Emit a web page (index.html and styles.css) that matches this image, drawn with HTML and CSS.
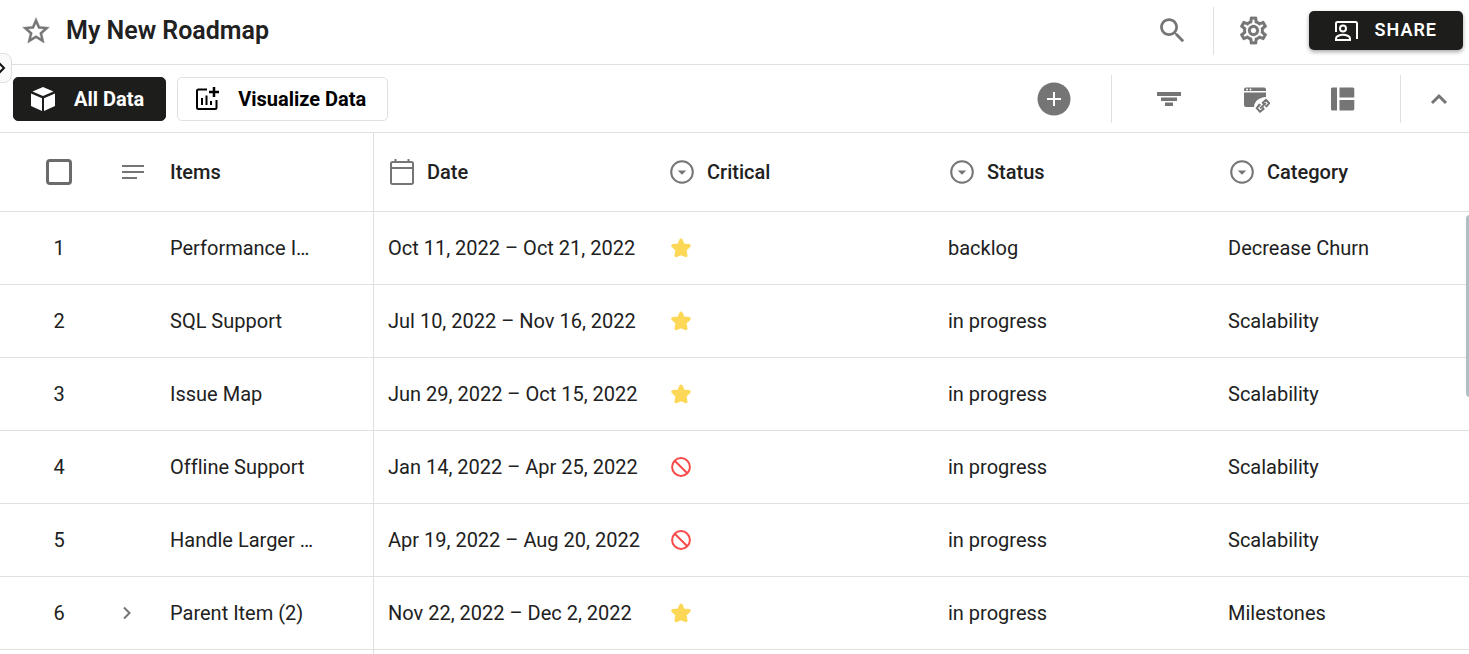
FILE: index.html
```
<!DOCTYPE html>
<html lang="en">
<head>
	<meta charset="UTF-8">
	<title>My New Roadmap</title>
	<link rel="stylesheet" href="styles.css">
</head>
<body>

<!-- shared icons -->
<svg class="sprite" aria-hidden="true">
	<symbol id="i-select" viewBox="0 0 24 24">
		<circle cx="12" cy="12" r="10.8" fill="none" stroke="currentColor" stroke-width="2"/>
		<path d="M7.8 10.4h8.4L12 14.8z" fill="currentColor"/>
	</symbol>
	<symbol id="i-star" viewBox="0 0 20 20">
		<path d="M10 2.300l2.200 4.800 5.800.700-4.100 4 .9 5.700L10 15.400l-4.800 2.100.9-5.700L2 7.800l5.800-.7z" fill="#fdd857" stroke="#fdd857" stroke-width="3.400" stroke-linejoin="round"/>
	</symbol>
	<symbol id="i-block" viewBox="0 0 20 20">
		<path d="M3.7 3.7l12.6 12.6M10 1.1a8.9 8.9 0 1 0 0 17.8a8.9 8.9 0 1 0 0-17.8z" fill="none" stroke="#fa4b4b" stroke-width="2"/>
	</symbol>
</svg>

<div class="app">
	<header class="header">
		<button class="iconBtn" aria-label="Favorite">
			<svg width="32" height="32" viewBox="0 0 24 24" fill="currentColor"><path stroke="currentColor" stroke-width=".3" d="M22 9.24l-7.19-.62L12 2 9.19 8.63 2 9.24l5.46 4.73L5.82 21 12 17.27 18.18 21l-1.63-7.03L22 9.24zM12 15.4l-3.76 2.27 1-4.28-3.32-2.88 4.38-.38L12 6.1l1.71 4.04 4.38.38-3.32 2.88 1 4.28L12 15.4z"/></svg>
		</button>
		<h1 class="title">My New Roadmap</h1>
		<button class="iconBtn" aria-label="Search">
			<svg width="33" height="33" viewBox="0 0 24 24" fill="currentColor"><path d="M15.5 14h-.79l-.28-.27C15.41 12.59 16 11.11 16 9.5 16 5.91 13.09 3 9.5 3S3 5.91 3 9.5 5.91 16 9.5 16c1.61 0 3.09-.59 4.23-1.57l.27.28v.79l5 4.99L20.49 19l-4.99-5zm-6 0C7.01 14 5 11.99 5 9.5S7.01 5 9.5 5 14 7.01 14 9.5 11.99 14 9.5 14z"/></svg>
		</button>
		<span class="divider dividerSmall"></span>
		<button class="iconBtn" aria-label="Settings">
			<svg width="33" height="33" viewBox="0 0 24 24" fill="currentColor"><path stroke="currentColor" stroke-width=".2" d="M19.43 12.98c.04-.32.07-.64.07-.98 0-.34-.03-.66-.07-.98l2.11-1.65c.19-.15.24-.42.12-.64l-2-3.46c-.09-.16-.26-.25-.44-.25-.06 0-.12.01-.17.03l-2.49 1c-.52-.4-1.08-.73-1.69-.98l-.38-2.65C14.46 2.18 14.25 2 14 2h-4c-.25 0-.46.18-.49.42l-.38 2.65c-.61.25-1.17.59-1.69.98l-2.49-1c-.06-.02-.12-.03-.18-.03-.17 0-.34.09-.43.25l-2 3.46c-.13.22-.07.49.12.64l2.11 1.65c-.04.32-.07.65-.07.98 0 .33.03.66.07.98l-2.11 1.65c-.19.15-.24.42-.12.64l2 3.46c.09.16.26.25.44.25.06 0 .12-.01.17-.03l2.49-1c.52.4 1.08.73 1.69.98l.38 2.65c.03.24.24.42.49.42h4c.25 0 .46-.18.49-.42l.38-2.65c.61-.25 1.17-.59 1.69-.98l2.49 1c.06.02.12.03.18.03.17 0 .34-.09.43-.25l2-3.46c.12-.22.07-.49-.12-.64l-2.11-1.65zm-1.98-1.71c.04.31.05.52.05.73 0 .21-.02.43-.05.73l-.14 1.13.89.7 1.08.84-.7 1.21-1.27-.51-1.04-.42-.9.68c-.43.32-.84.56-1.25.73l-1.06.43-.16 1.13-.2 1.35h-1.4l-.19-1.35-.16-1.13-1.06-.43c-.43-.18-.83-.41-1.23-.71l-.91-.7-1.06.43-1.27.51-.7-1.21 1.08-.84.89-.7-.14-1.13c-.03-.31-.05-.54-.05-.74s.02-.43.05-.73l.14-1.13-.89-.7-1.08-.84.7-1.21 1.27.51 1.04.42.9-.68c.43-.32.84-.56 1.25-.73l1.06-.43.16-1.13.2-1.35h1.39l.19 1.35.16 1.13 1.06.43c.43.18.83.41 1.23.71l.91.7 1.06-.43 1.27-.51.7 1.21-1.07.85-.89.7.14 1.13zM12 8c-2.21 0-4 1.79-4 4s1.79 4 4 4 4-1.79 4-4-1.79-4-4-4zm0 6c-1.1 0-2-.9-2-2s.9-2 2-2 2 .9 2 2-.9 2-2 2z"/></svg>
		</button>
		<button class="share">
			<svg width="24" height="22" viewBox="0 0 24 22" fill="none" stroke="currentColor" stroke-width="2">
				<path d="M2 12V3.500A1.500 1.500 0 0 1 3.500 2H21.500A1.500 1.500 0 0 1 23 3.500V19"/>
				<circle cx="9" cy="8.500" r="3"/>
				<path d="M2 20v-1.500C2 16 6 14.800 9 14.800S16 16 16 18.500V20z"/>
			</svg>
			<span class="shareText">SHARE</span>
		</button>
	</header>

	<nav class="toolbar">
		<button class="tab active">
			<svg width="26" height="26" viewBox="0 0 26 26" fill="currentColor">
				<path d="M13 1l10.500 4.500L13 10 2.500 5.500z"/>
				<path d="M1 7.500l11 4.800V25L1 20z"/>
				<path d="M25 7.500l-11 4.800V25l11-5z"/>
			</svg>
			All Data
		</button>
		<button class="tab">
			<svg width="26" height="26" viewBox="0 0 26 26" fill="none" stroke="currentColor" stroke-width="2">
				<path d="M13 3.500H4.500A1.500 1.500 0 0 0 3 5v16.500A1.500 1.500 0 0 0 4.500 23H21a1.500 1.500 0 0 0 1.500-1.500V14"/>
				<path d="M8 12v7M12.500 9.500V19M17 15v4"/>
				<path d="M20 1v10M15 6h10" stroke-width="2.500"/>
			</svg>
			Visualize Data
		</button>
		<span class="space"></span>
		<button class="iconBtn" aria-label="Add">
			<svg width="34" height="34" viewBox="0 0 34 34"><circle cx="17" cy="17" r="16.500" fill="currentColor"/><path d="M17 10v14M10 17h14" stroke="#fff" stroke-width="2"/></svg>
		</button>
		<span class="divider"></span>
		<div class="tools">
			<button class="iconBtn" aria-label="Filter">
				<svg width="24" height="16" viewBox="0 0 24 16" fill="currentColor"><path d="M0 1h24v4H0zM4 6.500h16v3.500H4zM8 11.500h8V15H8z"/></svg>
			</button>
			<button class="iconBtn" aria-label="Linked views">
				<svg width="28" height="28" viewBox="0 0 28 28" fill="currentColor">
					<path d="M2 4.500A2 2 0 0 1 4 2.500h18a2 2 0 0 1 2 2V6H2z"/>
					<path d="M2 7.500h22V12C17 12.500 12.500 16 12 22H4a2 2 0 0 1-2-2z"/>
					<circle cx="5" cy="4.400" r="1" fill="#fff"/><circle cx="8.500" cy="4.400" r="1" fill="#fff"/>
					<g fill="none" stroke="currentColor" stroke-width="2">
						<path d="M18.500 20.500L17.200 19.800 14.800 23.200 18 26.700 21.500 24 20.700 22.400"/>
						<path d="M21.500 18.800L20.800 17.600 24 14.800 27.200 18.200 24.500 21.300 23.300 20.600M18.200 23.400L23.800 18"/>
					</g>
				</svg>
			</button>
			<button class="iconBtn" aria-label="Layout">
				<svg width="24" height="24" viewBox="0 0 24 24" fill="currentColor"><path d="M0 1.500L1 .5h5v23H1l-1-1zM8.500.5H22l1.300 1v9H8.500zM8.500 13h14.800v9.500l-1.300 1H8.500z"/></svg>
			</button>
		</div>
		<span class="divider dividerLast"></span>
		<button class="iconBtn" aria-label="Collapse toolbar">
			<svg width="18" height="12" viewBox="0 0 18 12" fill="none" stroke="currentColor" stroke-width="3"><path d="M2 10l7-7 7 7"/></svg>
		</button>
	</nav>

	<!-- side panel handle -->
	<button class="handle" aria-label="Open side panel">
		<svg width="8" height="12" viewBox="0 0 8 12" fill="none" stroke="currentColor" stroke-width="2"><path d="M1 1l5 5-5 5"/></svg>
	</button>

	<main class="grid">
		<table class="table">
			<colgroup>
				<col class="cNum">
				<col class="cExpand">
				<col class="cItem">
				<col class="cField">
				<col class="cField">
				<col class="cField">
				<col>
			</colgroup>
			<thead>
				<tr>
					<th class="num"><input type="checkbox" class="check" aria-label="Select all"></th>
					<th class="expand">
						<svg width="23" height="16" viewBox="0 0 23 16" stroke="currentColor" stroke-width="2"><path d="M0 2h22M0 8h22M0 14h15"/></svg>
					</th>
					<th class="item">Items</th>
					<th><span class="field">
						<svg width="28" height="28" viewBox="0 0 28 28" fill="none" stroke="currentColor" stroke-width="2"><path d="M4.500 4h19a1.500 1.500 0 0 1 1.500 1.500v19a1.500 1.500 0 0 1-1.500 1.500h-19A1.500 1.500 0 0 1 3 24.500v-19A1.500 1.500 0 0 1 4.500 4zM3 10h22M7.500 1v3M20.500 1v3"/></svg>
						Date</span></th>
					<th><span class="field"><svg width="28" height="24"><use href="#i-select"/></svg>Critical</span></th>
					<th><span class="field"><svg width="28" height="24"><use href="#i-select"/></svg>Status</span></th>
					<th><span class="field"><svg width="28" height="24"><use href="#i-select"/></svg>Category</span></th>
				</tr>
			</thead>
			<tbody>
				<tr>
					<td class="num">1</td>
					<td class="expand"></td>
					<td class="item">Performance I…</td>
					<td>Oct 11, 2022 – Oct 21, 2022</td>
					<td><svg class="mark"><use href="#i-star"/></svg></td>
					<td>backlog</td>
					<td>Decrease Churn</td>
				</tr>
				<tr>
					<td class="num">2</td>
					<td class="expand"></td>
					<td class="item">SQL Support</td>
					<td>Jul 10, 2022 – Nov 16, 2022</td>
					<td><svg class="mark"><use href="#i-star"/></svg></td>
					<td>in progress</td>
					<td>Scalability</td>
				</tr>
				<tr>
					<td class="num">3</td>
					<td class="expand"></td>
					<td class="item">Issue Map</td>
					<td>Jun 29, 2022 – Oct 15, 2022</td>
					<td><svg class="mark"><use href="#i-star"/></svg></td>
					<td>in progress</td>
					<td>Scalability</td>
				</tr>
				<tr>
					<td class="num">4</td>
					<td class="expand"></td>
					<td class="item">Offline Support</td>
					<td>Jan 14, 2022 – Apr 25, 2022</td>
					<td><svg class="mark"><use href="#i-block"/></svg></td>
					<td>in progress</td>
					<td>Scalability</td>
				</tr>
				<tr>
					<td class="num">5</td>
					<td class="expand"></td>
					<td class="item">Handle Larger …</td>
					<td>Apr 19, 2022 – Aug 20, 2022</td>
					<td><svg class="mark"><use href="#i-block"/></svg></td>
					<td>in progress</td>
					<td>Scalability</td>
				</tr>
				<tr>
					<td class="num">6</td>
					<td class="expand">
						<button class="expandBtn" aria-label="Expand row">
							<svg width="10" height="14" viewBox="0 0 10 14" fill="none" stroke="currentColor" stroke-width="2"><path d="M2 1.500L7.500 7 2 12.500"/></svg>
						</button>
					</td>
					<td class="item">Parent Item (2)</td>
					<td>Nov 22, 2022 – Dec 2, 2022</td>
					<td><svg class="mark"><use href="#i-star"/></svg></td>
					<td>in progress</td>
					<td>Milestones</td>
				</tr>
				<tr>
					<td class="num"></td>
					<td class="expand"></td>
					<td class="item"></td>
					<td></td>
					<td></td>
					<td></td>
					<td></td>
				</tr>
			</tbody>
		</table>
		<div class="scroll"></div>
	</main>
</div>

</body>
</html>
```
FILE: styles.css
```
* {
	box-sizing: border-box;
}
body,
h1 {
	margin: 0;
}
body {
	font-family: Roboto, "Liberation Sans", sans-serif;
	font-size: 20px;
	font-variant-ligatures: none;
	color: #212121;
	background: #fff;
}
button {
	padding: 0;
	border: 0;
	background: none;
	font-family: inherit;
	color: inherit;
	cursor: pointer;
}
svg {
	display: block;
	flex: none;
}
.sprite {
	position: absolute;
	width: 0;
	height: 0;
}
.app {
	position: relative;
	display: flex;
	flex-direction: column;
	height: 100vh;
	overflow: hidden;
}

/* header */
.header {
	display: flex;
	align-items: center;
	flex: none;
	height: 65px;
	padding: 0 6px 3px 16px;
	border-bottom: 1px solid #e0e0e0;
}
.title {
	flex: 1;
	margin-left: 10px;
	font-size: 25px;
	line-height: 32px;
	font-weight: 600;
}
.iconBtn {
	display: flex;
	align-items: center;
	justify-content: center;
	flex: none;
	width: 40px;
	height: 40px;
	color: #757575;
}
.divider {
	flex: none;
	width: 1px;
	height: 48px;
	margin: 0 37px;
	background: #e0e0e0;
}
.dividerSmall {
	margin: 0 20px;
}
.dividerLast {
	margin-right: 18px;
}
.share {
	display: flex;
	align-items: center;
	gap: 17px;
	height: 39px;
	margin-left: 35px;
	padding: 0 26px 0 25px;
	border-radius: 5px;
	background: #1d1d1b;
	box-shadow: 0 2px 4px rgba(0, 0, 0, .35);
	color: #fff;
	font-size: 18px;
	font-weight: 600;
	letter-spacing: 1px;
}
.shareText {
	padding-bottom: 3px;
}

/* toolbar */
.toolbar {
	display: flex;
	align-items: center;
	flex: none;
	height: 68px;
	padding: 0 10px 0 13px;
	border-bottom: 1px solid #e0e0e0;
}
.tab {
	display: flex;
	align-items: center;
	gap: 18px;
	height: 44px;
	margin-right: 11px;
	padding: 0 21px 0 16px;
	border: 1px solid #e0e0e0;
	border-radius: 5px;
	font-size: 20px;
	font-weight: 700;
	color: #000;
}
.active {
	border-color: #1d1d1b;
	background: #1d1d1b;
	color: #fff;
}
.space {
	flex: 1;
}
.tools {
	display: flex;
	gap: 47px;
}
.handle {
	position: absolute;
	top: 53px;
	left: -12px;
	display: flex;
	align-items: center;
	justify-content: flex-end;
	width: 24px;
	height: 30px;
	padding-right: 5px;
	border: 1px solid #e0e0e0;
	border-radius: 8px;
	background: #fafafa;
	color: #111;
}

/* table */
.grid {
	position: relative;
	flex: 1;
	overflow: hidden;
}
.table {
	width: 100%;
	table-layout: fixed;
	border-collapse: separate;
	border-spacing: 0;
}
.cNum {
	width: 118px;
}
.cExpand {
	width: 52px;
}
.cItem {
	width: 204px;
}
.cField {
	width: 280px;
}
th,
td {
	height: 73px;
	padding: 0 0 0 14px;
	border-bottom: 1px solid #e0e0e0;
	text-align: left;
	white-space: nowrap;
}
th {
	height: 79px;
	font-weight: 500;
}
th svg {
	color: #757575;
}
th.num,
td.num {
	padding: 0;
	text-align: center;
}
th.expand,
td.expand {
	padding: 0 0 0 4px;
}
th.item,
td.item {
	padding: 0;
	border-right: 1px solid #e0e0e0;
}
.field {
	display: flex;
	align-items: center;
	gap: 11px;
}
.check {
	appearance: none;
	display: block;
	width: 26px;
	height: 26px;
	margin: 0 auto;
	border: 3px solid #6b6b6b;
	border-radius: 4px;
}
.mark {
	width: 20px;
	height: 20px;
	margin-left: 3px;
}
.expandBtn {
	display: block;
	color: #757575;
}
.scroll {
	position: absolute;
	top: 82px;
	right: -5px;
	width: 8px;
	height: 182px;
	border-radius: 4px;
	background: #b0bec5;
}
```
